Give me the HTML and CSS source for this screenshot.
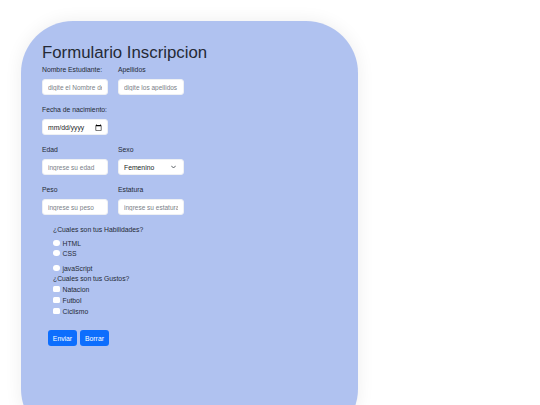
FILE: index.html
```html
<!DOCTYPE html>
<html>
<head>
  <title>Formulario Inscripcion</title>
  <link rel="stylesheet" href="styles.css">
</head>
<body>
  <div class="card">
    <h1 class="title">Formulario Inscripcion</h1>
    <form id="registro">
      <div class="row">
        <div class="field">
          <label for="nombre">Nombre Estudiante:</label>
          <input type="text" id="nombre" placeholder="digite el Nombre del estudiante">
        </div>
        <div class="field">
          <label for="apellidos">Apellidos</label>
          <input type="text" id="apellidos" placeholder="digite los apellidos">
        </div>
      </div>
      <div class="row">
        <div class="field">
          <label for="fecha">Fecha de nacimiento:</label>
          <input type="date" id="fecha">
        </div>
      </div>
      <div class="row">
        <div class="field">
          <label for="edad">Edad</label>
          <input type="text" id="edad" placeholder="ingrese su edad">
        </div>
        <div class="field">
          <label for="sexo">Sexo</label>
          <div class="select-wrap">
            <select id="sexo">
              <option>Femenino</option>
              <option>Masculino</option>
            </select>
            <svg class="chevron" width="5" height="4" viewBox="0 0 10 7">
              <path d="M1 1.5l4 4 4-4" fill="none" stroke="#343a40" stroke-width="1.6" stroke-linecap="round" stroke-linejoin="round"/>
            </svg>
          </div>
        </div>
      </div>
      <div class="row">
        <div class="field">
          <label for="peso">Peso</label>
          <input type="text" id="peso" placeholder="ingrese su peso">
        </div>
        <div class="field">
          <label for="estatura">Estatura</label>
          <input type="text" id="estatura" placeholder="ingrese su estatura">
        </div>
      </div>

      <div class="choices">
        <div class="question">¿Cuales son tus Habilidades?</div>
        <label class="option first"><input type="radio" name="hab"> HTML</label>
        <label class="option"><input type="radio" name="hab"> CSS</label>
        <label class="option spaced"><input type="radio" name="hab"> javaScript</label>
        <div class="question q2">¿Cuales son tus Gustos?</div>
        <label class="option"><input type="checkbox"> Natacion</label>
        <label class="option gap"><input type="checkbox"> Futbol</label>
        <label class="option gap"><input type="checkbox"> Ciclismo</label>
      </div>

      <div class="actions">
        <button type="submit" class="btn">Enviar</button>
        <button type="reset" class="btn">Borrar</button>
      </div>
    </form>
  </div>
</body>
</html>
```

FILE: styles.css
```css
body {
  margin: 0;
  padding: 21px;
  background-color: #fff;
  font-family: "Liberation Sans", Arial, sans-serif;
  color: #252a36;
}

.card {
  width: 337px;
  height: 420px;
  box-sizing: border-box;
  padding: 22px 21px;
  background-color: #b0c2f0;
  border-radius: 52px;
  box-shadow: 0 0 18px rgba(0, 0, 0, 0.07);
}

.title {
  margin: 0 0 2px;
  font-size: 16.8px;
  line-height: 20px;
  font-weight: 400;
}

.row {
  display: flex;
  gap: 10px;
  margin-bottom: 10px;
}

.field {
  width: 66px;
}

.field label {
  display: block;
  font-size: 6.8px;
  line-height: 10px;
  margin-bottom: 4px;
}

input[type="text"],
input[type="date"],
select {
  display: block;
  width: 66px;
  height: 16px;
  box-sizing: border-box;
  padding: 0 5px;
  margin: 0;
  border: 1px solid #eef0f3;
  border-radius: 3px;
  background-color: #fff;
  font-family: "Liberation Sans", Arial, sans-serif;
  font-size: 6.5px;
  color: #212529;
  outline: none;
}

input::placeholder {
  color: #7a8087;
}

input[type="date"],
select {
  font-size: 6.8px;
}

input[type="date"]::-webkit-datetime-edit-text,
input[type="date"]::-webkit-datetime-edit-month-field,
input[type="date"]::-webkit-datetime-edit-day-field,
input[type="date"]::-webkit-datetime-edit-year-field {
  padding: 0;
  margin: 0;
}

input[type="date"]::-webkit-calendar-picker-indicator {
  width: 7px;
  height: 7px;
  padding: 0;
  margin: 0;
}

.select-wrap {
  position: relative;
  width: 66px;
}

select {
  appearance: none;
  -webkit-appearance: none;
}

.chevron {
  position: absolute;
  right: 8px;
  top: 6px;
  pointer-events: none;
}

.choices {
  padding-left: 11px;
  font-size: 6.8px;
}

.question {
  line-height: 10px;
}

.q2 {
  margin-top: 1px;
}

.option {
  display: flex;
  align-items: center;
  height: 10px;
}

.option.first {
  margin-top: 3px;
}

.option.spaced {
  margin-top: 5px;
}

.option.gap {
  margin-top: 1px;
}

.option input {
  appearance: none;
  -webkit-appearance: none;
  width: 6.5px;
  height: 6.5px;
  margin: 0 3px 0 0;
  background-color: #fff;
  border: none;
}

.option input[type="radio"] {
  border-radius: 50%;
}

.option input[type="checkbox"] {
  border-radius: 1.5px;
}

.actions {
  display: flex;
  gap: 3px;
  margin: 14px 0 0 6px;
}

.btn {
  height: 16px;
  width: 29px;
  padding: 0;
  border: none;
  border-radius: 3px;
  background-color: #0d6efd;
  color: #fff;
  font-family: "Liberation Sans", Arial, sans-serif;
  font-size: 6.8px;
  cursor: pointer;
}
```
